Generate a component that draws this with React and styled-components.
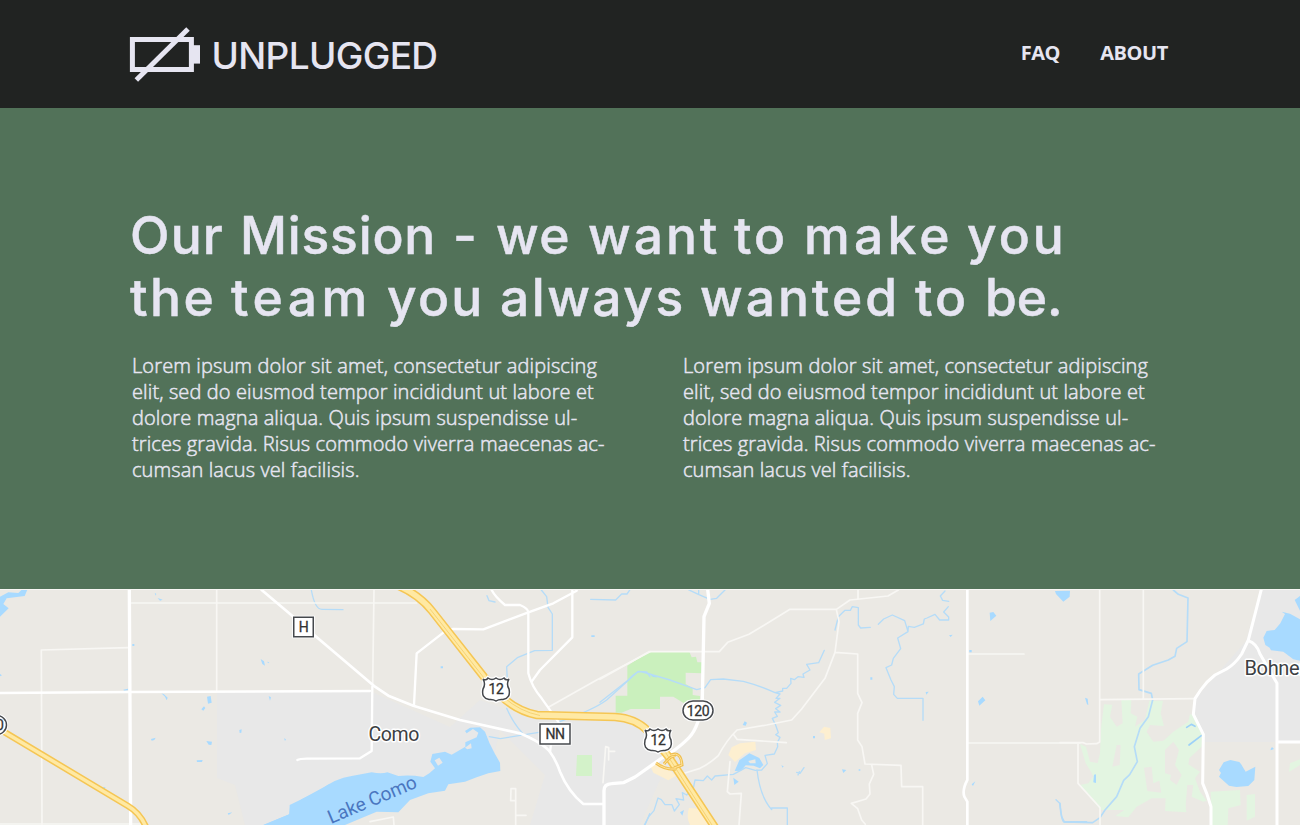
import React from "react";
import styled, { createGlobalStyle } from "styled-components";

const GlobalStyle = createGlobalStyle`
  * { box-sizing: border-box; }
  body { margin: 0; background: #527259; }
`;

const Page = styled.div`
  display: flex;
  flex-direction: column;
  width: 1300px;
  height: 825px;
  overflow: hidden;
  font-family: "Open Sans", sans-serif;
  color: #e6e5f1;
`;

const Header = styled.header`
  display: flex;
  justify-content: space-between;
  height: 108px;
  flex: none;
  padding: 0 132px 0 129px;
  background: #212322;
`;

const Brand = styled.a`
  display: flex;
  align-items: center;
  gap: 10.5px;
`;

const BrandName = styled.span`
  font: 500 37px/44px Inter, sans-serif;
  letter-spacing: -0.65px;
  padding-top: 3px;
`;

const Nav = styled.nav`
  display: flex;
  align-items: center;
  gap: 40px;
  padding-bottom: 2px;
`;

const NavLink = styled.a`
  font-size: 20px;
  line-height: 26px;
  font-weight: 700;
  letter-spacing: -0.4px;
`;

const Mission = styled.section`
  height: 481px;
  flex: none;
  padding: 96px 132px 0;
  background: #527259;
`;

const Title = styled.h1`
  margin: 0 0 0 -2px;
  font: 500 51.5px/62px Inter, sans-serif;
  -webkit-text-stroke: 0.5px #e6e5f1;
  white-space: nowrap;
`;

const TitleLine = styled.span`
  display: flex;
`;

const Word = styled.span`
  flex: none;
  width: ${(p) => p.$w}px;
  letter-spacing: ${(p) => p.$track || 0}px;
`;

const Columns = styled.div`
  display: grid;
  grid-template-columns: 480px 480px;
  column-gap: 71px;
  margin-top: 25px;
`;

const Copy = styled.p`
  margin: 0;
  font-size: 20px;
  line-height: 26px;
  font-weight: 300;
  letter-spacing: 0.12px;
  -webkit-text-stroke: 0.5px #e6e5f1;
  white-space: nowrap;
`;

const MapArea = styled.svg`
  display: block;
  flex: none;
  width: 1300px;
  height: 236px;
  background: #ebe9e4;
`;

const Sheet = ({ x, children }) => (
  <g transform={`translate(${x} 580) scale(.33333)`}>{children}</g>
);

const Line = ({ d, w = 6, c = "#fff" }) => (
  <path d={d} fill="none" stroke={c} strokeWidth={w} strokeLinejoin="round" strokeLinecap="round" />
);
const Minor = ({ d, w = 5 }) => <Line d={d} w={w} c="#f8f7f4" />;
const Stream = ({ d, w = 4 }) => <Line d={d} w={w} c="#b5dcf8" />;
const Lake = ({ d }) => <path d={d} fill="#a8daff" />;

const Logo = () => (
  <svg width="72" height="56" viewBox="0 0 72 56" fill="none">
    <path d="M3.4 13.5H62.4V43.4H3.4Z" stroke="#e6e5f1" strokeWidth="5" />
    <path d="M64 19.2H71V37.6H64Z" fill="#e6e5f1" />
    <path d="M7.3 54L59 3" stroke="#e6e5f1" strokeWidth="5" />
  </svg>
);

const shield = "M-13-10Q-10-8-8-11Q-4-8 0-11Q4-8 8-11Q10-8 13-10Q10-5 13 0Q15 9 7 10.5Q3 10 0 12Q-3 10-7 10.5Q-15 9-13 0Q-10-5-13-10Z";

const Shield = ({ x, y }) => (
  <g transform={`translate(${x} ${y})`}>
    <path d={shield} fill="#fff" stroke="#fff" strokeWidth="4" />
    <path d={shield} fill="#fff" stroke="#45484c" strokeWidth="1.5" />
    <text y="5.2" textAnchor="middle" fontSize="14" fontWeight="400" letterSpacing="-0.4" fill="#333" stroke="#333" strokeWidth=".3" fontFamily="Roboto, sans-serif">12</text>
  </g>
);

const Sign = ({ x, y, w, h, r = 0, label }) => (
  <g transform={`translate(${x} ${y})`}>
    <rect x={-w / 2 - 1.5} y={-h / 2 - 1.5} width={w + 3} height={h + 3} rx={r} fill="#fff" />
    <rect x={-w / 2} y={-h / 2} width={w} height={h} rx={r} fill="#fff" stroke="#45484c" strokeWidth="1.5" />
    <text y="5" textAnchor="middle" fontSize="14" fontWeight="400" letterSpacing="-0.4" fill="#333" stroke="#333" strokeWidth=".3" fontFamily="Roboto, sans-serif">{label}</text>
  </g>
);

const Place = ({ x, y, children, ...rest }) => (
  <text x={x} y={y} fontFamily="Roboto, sans-serif" fontSize="20" letterSpacing="-0.35" fill="#3c4043" stroke="#fff" strokeWidth="3" paintOrder="stroke" strokeLinejoin="round" {...rest}>
    {children}
  </text>
);

const RoadMap = () => (
  <MapArea viewBox="0 589 1300 236">
    {/* built-up areas */}
    <g fill="#e8e8e8">
      <path d="M217 692H372L450 727L480 700L530 718L640 719L690 770L660 780L640 825H530L545 775L500 730L490 770L400 790L300 825H245L235 785L217 778Z" />
      <path d="M1261 589H1300V742H1202L1194 713L1196 698L1246 641Z" />
    </g>
    {/* parks, marsh and commercial patches */}
    <Sheet x={600}>
      <path fill="#caf0bd" d="M82 257L147 215H268L275 232L288 230L292 247H305V280L257 278V312L278 325V345L300 348V370H252L220 350H180V387L92 387L65 398H47V347H82Z" />
      <g fill="#fdefd0">
        <path d="M420 490L466 485L468 510L435 520L405 546L385 525L395 502Z" />
        <path d="M658 457L672 440L691 444L693 475L674 480L673 461Z" />
        <path d="M150 556L190 552L228 587L205 601L160 578Z" />
        <path d="M267 684L300 686L325 735H270Q258 710 267 684Z" />
      </g>
    </Sheet>
    <path d="M577 755H592V776H576Z" fill="#d3f2c9" />
    <Sheet x={1060}>
      <g fill="#e3f5e1">
        <path d="M132 373L157 374L150 410L170 440L188 430L184 360H214L212 400L232 410L225 440L255 420L268 362H309L302 400L312 438L270 435L260 455L280 485L310 482L340 455L385 425L390 402L403 408L428 455L425 500L388 535L385 553L420 575L405 595L420 635L440 662L430 665L395 650L400 615H382L377 675L379 697L315 693L317 655L275 655L230 680L205 712L166 708L193 690H121L60 615L85 610L105 582L120 520L123 445Z" />
        <path d="M60 492L78 500L90 545L115 550L110 610L93 575L77 550Z" />
        <path d="M452 635L540 630L542 675L505 685L503 735H456ZM560 645L585 642V710L560 722ZM690 550L720 538V555L687 576Z" />
      </g>
      <path fill="#ebe9e4" d="M170 495H182L179 555L157 560ZM252 563L275 560L280 610L298 602L304 638L262 633ZM340 485L357 510L345 555L365 585L350 615L330 600L333 585L315 580V510Z" />
    </Sheet>
    {/* lakes */}
    <Sheet x={0}>
      <Lake d="M0 50L25 37L55 39L65 29H82L74 48L20 55L10 72L26 85L0 110Z" />
      <Lake d="M790 735L868 703L870 685L905 658L990 611V735Z" />
      <Lake d="M621 350L632 348L635 368L624 371ZM604 388L612 379L616 384L610 392ZM619 483L636 485L634 495L626 494ZM590 541L608 540L606 546L591 546ZM453 477L467 473L463 480L455 482ZM473 54L488 59L480 62ZM464 38L469 42L467 47ZM782 237L792 244L795 257L787 252ZM802 245L808 247L804 250ZM806 348L813 352L810 362ZM484 340L492 343L503 353L500 361L495 350ZM718 450L725 448L724 458L719 459ZM683 700L697 697L686 705ZM370 329L384 326V331L372 332ZM307 622L316 621L312 644ZM852 475L858 478L855 483ZM397 192H403V198H397ZM0 282L6 286L0 289Z" />
    </Sheet>
    <Sheet x={320}>
      <Lake d="M-170 735L-92 703L-91 675L0 631Q45 595 95 588L155 577Q185 582 202 577L235 588Q270 584 310 591L328 580L345 565L331 545L337 522L375 515L395 524L436 500V487L470 472L475 458L459 447L440 460L435 453L450 443L480 442L495 455Q507 490 525 522L540 548L541 573L505 580L470 592L435 605L385 613L375 632L325 640L270 660L235 697L170 695L75 735Z" />
      <path fill="#e8e8e8" d="M344 541L358 533L368 548L354 557ZM435 503L453 490L455 505L442 508Z" />
    </Sheet>
    <Sheet x={600}>
      <Lake d="M404 573L418 541L448 520L478 534L490 555L480 565L461 557L437 556L423 572ZM400 593L416 605L403 615ZM428 435L434 424L441 428L437 437ZM240 697L252 690L247 707ZM726 568L739 570L730 579ZM145 278L173 293L158 290Z" />
      <path fill="#ebe9e4" d="M445 543L466 538L467 550L450 550Z" />
      <Stream d="M590 577L600 580L612 563M598 575L594 585" />
      <Lake d="M811 292H817V299H811ZM544 556L551 559L548 563ZM639 468H645V475H639ZM776 568H781V572H776Z" />
    </Sheet>
    <Sheet x={840}>
      <Lake d="M449 98L460 96L469 107L451 123ZM414 364L428 350L436 361L418 377ZM645 33L690 32L689 50L670 65L648 42ZM395 613L406 604L399 618ZM257 336L266 335L259 344ZM327 166L338 164L332 171ZM388 210H395V217H388Z" />
    </Sheet>
    <Sheet x={1060}>
      <Lake d="M720 242L700 238L670 215L633 211L629 203L616 195L610 173L620 153L644 150L661 130L675 102L665 95L690 101L720 118ZM720 48L704 60L720 92Z" />
      <Lake d="M477 570L491 547L511 540L538 546L543 552L557 575L586 560L583 600L565 618L529 621L507 617L477 590L483 579Z" />
      <Lake d="M632 507L636 501L642 507L632 511ZM75 353L83 356L85 375L81 373ZM102 584L108 583V609L100 607Z" />
      <Line d="M380 442L394 433L405 439M387 495L424 467" c="#9dd1f8" w={5} />
    </Sheet>
    {/* streams */}
    <Sheet x={0}><Stream d="M934 30Q945 91 968 88L1029 89" /></Sheet>
    <Sheet x={320}>
      <Stream d="M664 30L680 50L684 82L697 102V211L644 212L592 233L560 260L562 300M560 385Q580 430 608 460M508 470L541 476L656 457M716 426Q820 390 860 360L955 274L980 276L990 290M812 58L887 60L905 42H921L930 29M501 47L507 62L525 66M975 735L989 701" />
      <Lake d="M362 259H369V265H362ZM814 166H824V171H814Z" />
    </Sheet>
    <Sheet x={600}>
      <Stream d="M0 367L85 300Q110 270 128 276L210 300L290 329L315 323L332 299L370 297L430 304Q480 317 525 338L548 333V325H560L573 310L572 295L583 299L594 290L612 292L609 282L630 270L620 253L656 248L673 211M525 338L540 342L528 355H540L524 367L542 376L527 386L540 396H524L532 409L517 415L526 433L535 458L527 464L540 472L532 488L533 500L523 522L495 526L502 551L485 570L466 571L437 563L421 572L400 583L345 588L335 600L322 588L310 602L285 600L280 625L260 645L247 638L251 660L228 656L238 674L223 693L216 674L195 674L184 659L174 654L162 692L147 709L133 735M471 570Q480 650 515 689V684H562V735M265 29L295 43L330 58L350 55L375 30M296 30V44" />
    </Sheet>
    <Sheet x={840}>
      <Stream d="M-15 150L-5 110L15 91H31L37 80L55 83V135L62 144L91 142M115 133L131 117L157 105L194 122L204 155L173 174L182 206L160 235L155 255L138 263L153 300L163 320L161 343L172 355H249V421M204 155L205 139L223 142L250 132L253 117L261 114L285 103L299 120H326V111L311 96L325 80M326 64L308 61L301 48L315 33M648 659L659 670L665 710L673 725H740" />
    </Sheet>
    <Sheet x={1060}>
      <Stream d="M0 670Q4 729 15 726L98 728L120 713L135 690L170 650L191 601L209 584L232 545L223 500L240 445L265 410L278 360L274 340L237 329L236 282L278 256L325 240L345 229L350 205L381 185L384 54L355 43L340 30" w={5} />
    </Sheet>
    {/* minor roads */}
    <Sheet x={0}><Minor d="M126 735L124 210L385 203M395 69H1250M650 30V331M0 732H440" /></Sheet>
    <Sheet x={320}><Minor d="M162 30L158 320M685 382L830 300L990 215M849 608L857 500L866 503V540M866 514H884M573 626H587V662H572ZM587 662V735M587 706H618M150 725L220 711L222 735" /></Sheet>
    <Sheet x={600}>
      <Minor d="M0 298L147 215H358L383 187L447 163L570 88H709L750 60L864 48L895 30M774 30V57M709 88L717 125L705 217L675 295L605 387L575 420L500 435L411 450Q380 480 355 527Q330 550 300 565L255 579M400 463L411 478L559 488M390 545L382 635L390 642L424 640L417 735M705 217L773 222V340L786 368L773 400V480L786 500L795 552L903 556L905 620H968V735M815 555L821 583L808 612L810 642L798 657L754 670L773 686L785 720L796 733" />
    </Sheet>
    <Sheet x={840}><Minor d="M386 222H552M386 489H720" /></Sheet>
    <Sheet x={1060}><Minor d="M119 30V486L110 491L79 492L70 488H0M250 30V357M120 359L405 356M54 490V610L120 683V735" /></Sheet>
    {/* main roads */}
    <Sheet x={0}>
      <Line d="M388 28L392 735" w={10} />
      <Line d="M0 339L390 336L1110 333" w={7} />
      <Line d="M785 30L880 110L960 180L1125 320L1165 347L1240 377L1380 420L1560 460Q1630 490 1650 516Q1668 540 1680 575Q1705 635 1750 672H1810" w={8} />
      <Line d="M892 540Q900 535 930 536L1080 535L1115 513L1117 320" w={7} />
    </Sheet>
    <Sheet x={320}>
      <Line d="M282 375L290 220L370 158L398 147L490 148L623 98L700 70L770 32M515 30Q525 50 555 75H600Q625 85 625 98V280Q635 320 665 355L716 427M757 30V172L660 270L635 305M690 516L693 493" w={7} />
    </Sheet>
    <Sheet x={600}>
      <Line d="M323 28L328 70L312 110L307 355Q300 440 265 475Q230 510 183 536L105 591L70 608L35 611Q12 612 12 632V735" w={10} />
      <Line d="M0 672H11" w={6} />
    </Sheet>
    <Sheet x={840}><Line d="M382 28V600Q366 630 373 650L382 665V735" w={8} /></Sheet>
    <Sheet x={1060}>
      <Line d="M604 28L587 95L565 180L545 222Q525 252 500 267L465 285Q440 304 422 330L405 356L400 403L430 463L428 610L440 640L453 680V735M565 182Q590 190 600 222L651 310V735M653 486H720" w={9} />
    </Sheet>
    {/* highways */}
    {[["#f5c654", 8.5], ["#ffe9a3", 5.4]].map(([c, w]) => (
      <g key={c} fill="none" stroke={c} strokeWidth={w} strokeLinecap="butt">
        <path d="M392 583Q418 593 432 611L484 677L501 696Q517 711 537 715L615 717Q635 718 648 731L668 756L716 829" />
        <path d="M-4 727L128 806Q140 813 146 827" strokeWidth={w - 2} />
      </g>
    ))}
    <g fill="none" stroke="#f0c862" strokeWidth=".7">
      <path d="M430 609L484 678M504 697.5Q520 711.5 540 715.5M664 750L712 825" />
      <path d="M656 763Q665 770 676 769M671 755Q681 751 682 765L674 768M664 764Q672 754 675 757" stroke="#efbf50" strokeWidth="3" />
      <path d="M656 763Q665 770 676 769M671 755Q681 751 682 765L674 768M664 764Q672 754 675 757" stroke="#ffe39a" strokeWidth="1" />
    </g>
    {/* route markers and place names */}
    <Sign x={303.5} y={627} w={19.5} h={19.5} label="H" />
    <Sign x={555} y={734} w={30} h={20} label="NN" />
    <Sign x={698} y={710.5} w={30} h={19} r={10} label="120" />
    <Sign x={-4} y={725} w={21} h={19} r={10} label="50" />
    <Shield x={496} y={689} />
    <Shield x={658} y={740} />
    <Place x={368.5} y={741} fontSize="19.5">Como</Place>
    <Place x={1244.5} y={674.5}>Bohners</Place>
    <Place x={331} y={824} transform="rotate(-23 331 824)" fontSize="19" letterSpacing="-0.1" style={{ stroke: "none" }} fill="#4a76c0">Lake Como</Place>
    <path d="M0 589.5H1300" stroke="#f8f7f5" />
  </MapArea>
);

const paragraph = [
  "Lorem ipsum dolor sit amet, consectetur adipiscing",
  "elit, sed do eiusmod tempor incididunt ut labore et",
  "dolore magna aliqua. Quis ipsum suspendisse ul-",
  "trices gravida. Risus commodo viverra maecenas ac-",
  "cumsan lacus vel facilisis.",
];

/* word, distance to the next word, tracking */
const titleLines = [
  [["Our", 110, 1.2], ["Mission", 213, 0.8], ["-", 43, 0], ["we", 92, 1.5], ["want", 146, 3], ["to", 70, 3], ["make", 163, 4.2], ["you", 98, 3]],
  [["the", 101, 2.5], ["team", 156, 4.5], ["you", 113, 2.3], ["always", 200, 2.5], ["wanted", 215, 3], ["to", 70, 3], ["be.", 80, 0]],
];

const Paragraph = () => (
  <Copy>
    {paragraph.map((line) => (
      <React.Fragment key={line}>{line}<br /></React.Fragment>
    ))}
  </Copy>
);

export default function App() {
  return (
    <Page>
      <GlobalStyle />
      <Header>
        <Brand>
          <Logo />
          <BrandName>UNPLUGGED</BrandName>
        </Brand>
        <Nav>
          <NavLink>FAQ</NavLink>
          <NavLink>ABOUT</NavLink>
        </Nav>
      </Header>
      <Mission>
        <Title>
          {titleLines.map((words, i) => (
            <TitleLine key={i}>
              {words.map(([text, w, track]) => (
                <Word key={text} $w={w} $track={track}>{text} </Word>
              ))}
            </TitleLine>
          ))}
        </Title>
        <Columns>
          <Paragraph />
          <Paragraph />
        </Columns>
      </Mission>
      <RoadMap />
    </Page>
  );
}
